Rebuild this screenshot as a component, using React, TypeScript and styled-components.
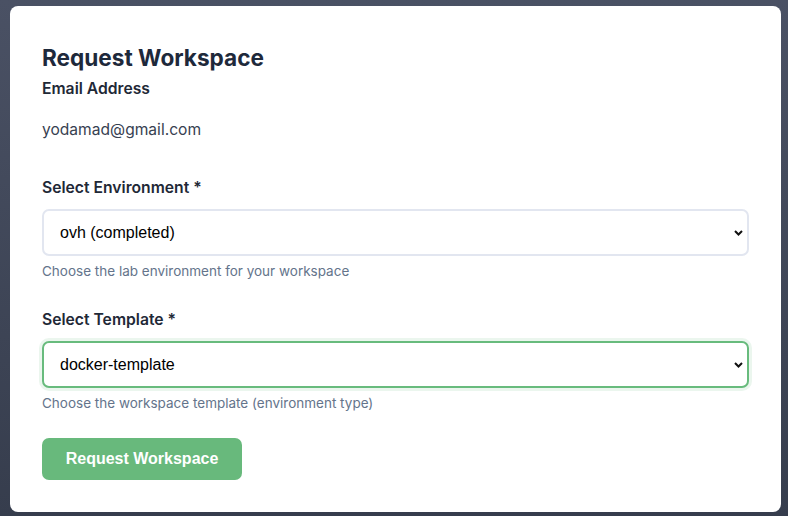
import React, { useState } from "react";
import styled, { createGlobalStyle } from "styled-components";

const GlobalStyle = createGlobalStyle`
  html, body {
    margin: 0;
    padding: 0;
  }
  body {
    font-family: Inter, "Noto Sans", sans-serif;
    background: linear-gradient(180deg, #4a5164 0%, #363d4d 100%);
    min-height: 516px;
  }
`;

const Page = styled.div`
  box-sizing: border-box;
  height: 516px;
  padding: 6px 7px 4px 10px;
`;

const Card = styled.form`
  box-sizing: border-box;
  height: 100%;
  background: #ffffff;
  border-radius: 8px;
  padding: 38px 32px 32px;
  display: flex;
  flex-direction: column;
`;

const Title = styled.h2`
  margin: 0 0 5px;
  font-size: 22.6px;
  line-height: 28px;
  font-weight: 700;
  color: #1e293b;
`;

const Label = styled.label<{ gap: number }>`
  display: block;
  font-size: 15.7px;
  line-height: 24px;
  font-weight: 600;
  color: #1f2937;
  margin-bottom: ${({ gap }) => gap}px;
`;

const EmailValue = styled.div`
  font-size: 15.6px;
  line-height: 24px;
  color: #374151;
  margin-bottom: 34px;
`;

const SelectWrap = styled.div`
  position: relative;
`;

const Select = styled.select<{ focused: boolean }>`
  appearance: none;
  -webkit-appearance: none;
  box-sizing: border-box;
  width: 100%;
  height: 47px;
  padding: 0 40px 0 16px;
  font-family: "Liberation Sans", Arial, sans-serif;
  font-size: 16px;
  color: #000000;
  background: #ffffff;
  border: 2px solid ${({ focused }) => (focused ? "#68bb7d" : "#e2e6f0")};
  border-radius: 7px;
  box-shadow: ${({ focused }) => (focused ? "0 0 0 3px #ebf6ee" : "none")};
  outline: none;
`;

const Chevron = styled.svg`
  position: absolute;
  right: 6px;
  top: 50%;
  transform: translateY(-50%);
  pointer-events: none;
`;

const Help = styled.div<{ gap: number }>`
  margin-top: 5px;
  margin-bottom: ${({ gap }) => gap}px;
  font-size: 13.5px;
  line-height: 20px;
  color: #64748b;
`;

const SubmitButton = styled.button`
  align-self: flex-start;
  width: 200px;
  height: 42px;
  border: none;
  border-radius: 7px;
  background: #68b97c;
  color: #ffffff;
  font-family: "Liberation Sans", Arial, sans-serif;
  font-size: 16px;
  font-weight: 700;
  cursor: pointer;
`;

function ChevronIcon() {
  return (
    <Chevron width="9" height="6" viewBox="0 0 9 6">
      <path d="M1 1 L4.5 4.5 L8 1" fill="none" stroke="#111" strokeWidth="2" />
    </Chevron>
  );
}

export default function App() {
  const [env, setEnv] = useState("ovh");
  const [template, setTemplate] = useState("docker-template");

  return (
    <>
      <GlobalStyle />
      <Page>
        <Card onSubmit={(e) => e.preventDefault()}>
          <Title>Request Workspace</Title>
          <Label gap={17}>Email Address</Label>
          <EmailValue>yodamad@gmail.com</EmailValue>

          <Label gap={9} htmlFor="env">Select Environment *</Label>
          <SelectWrap>
            <Select id="env" focused={false} value={env} onChange={(e) => setEnv(e.target.value)}>
              <option value="ovh">ovh (completed)</option>
            </Select>
            <ChevronIcon />
          </SelectWrap>
          <Help gap={27}>Choose the lab environment for your workspace</Help>

          <Label gap={9} htmlFor="template">Select Template *</Label>
          <SelectWrap>
            <Select
              id="template"
              focused={true}
              value={template}
              onChange={(e) => setTemplate(e.target.value)}
            >
              <option value="docker-template">docker-template</option>
            </Select>
            <ChevronIcon />
          </SelectWrap>
          <Help gap={25}>Choose the workspace template (environment type)</Help>

          <SubmitButton type="submit">Request Workspace</SubmitButton>
        </Card>
      </Page>
    </>
  );
}
